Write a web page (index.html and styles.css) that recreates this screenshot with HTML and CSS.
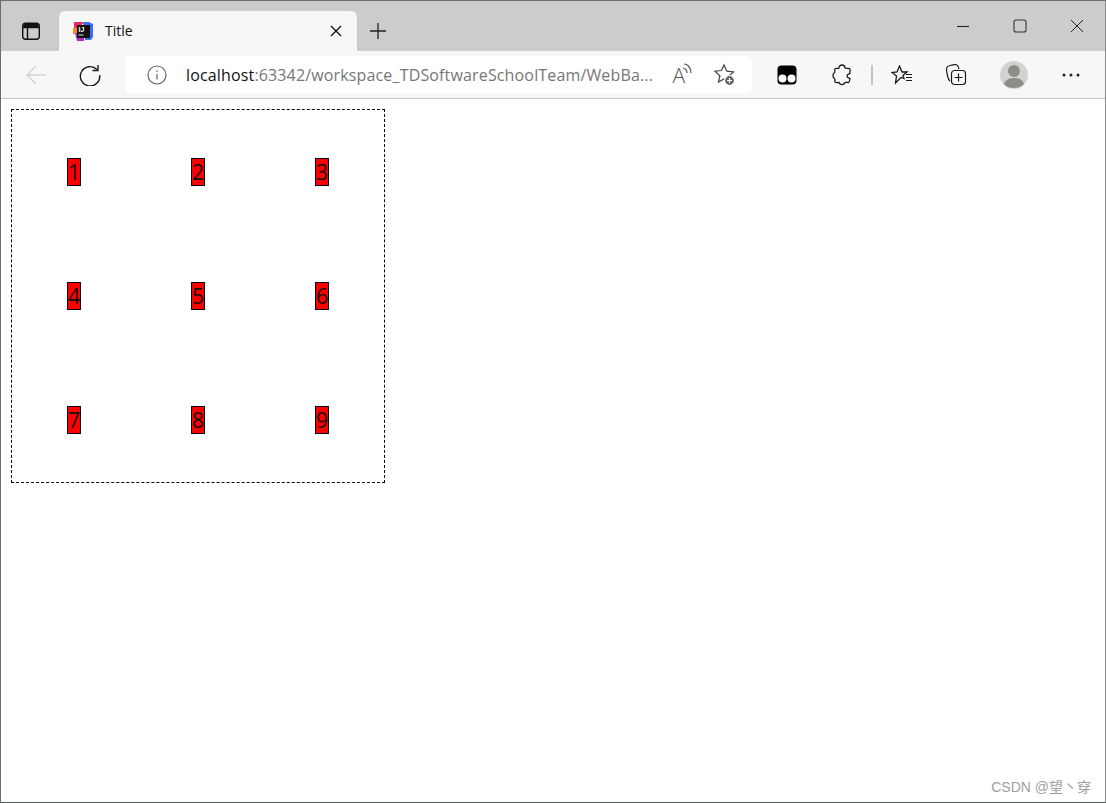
FILE: index.html
```html
<!DOCTYPE html>
<html lang="en">
<head>
    <meta charset="UTF-8">
    <title>Title</title>
    <link rel="stylesheet" href="styles.css">
</head>
<body>
    <div class="window">
        <!-- Tab strip -->
        <div class="tab-strip">
            <div class="strip-btn sidebar-btn">
                <svg width="20" height="20" viewBox="0 0 20 20" fill="none" stroke="#111" stroke-width="1.4"><rect x="1.7" y="2.2" width="16.6" height="16" rx="3"/><path d="M2 6.500h16M6.500 6.500v11.500"/><path d="M2.500 3h15v3.500h-15z" fill="#111" stroke="none"/></svg>
            </div>
            <div class="tab">
                <svg class="favicon" width="20" height="20" viewBox="0 0 20 20">
                    <path d="M2 1h7l2 2H2z" fill="#f0245e"/>
                    <path d="M10 1h6l4 2v13l-2 3h-6z" fill="#3f6cf5"/>
                    <path d="M1 1h8v8H1z" fill="#ee2a63"/>
                    <path d="M0 7h4v6H0z" fill="#f98a1e"/>
                    <path d="M2 12h9v8H4z" fill="#b32cc4"/>
                    <rect x="4" y="4" width="13" height="13" fill="#111"/>
                    <text x="5.500" y="11" class="favicon-text">IJ</text>
                    <rect x="5.500" y="13.500" width="5" height="1" fill="#eee"/>
                </svg>
                <span class="tab-title">Title</span>
                <svg class="tab-close" width="12" height="12" viewBox="0 0 12 12" stroke="#111" stroke-width="1.4"><path d="M1 1l10 10M11 1L1 11"/></svg>
            </div>
            <div class="strip-btn new-tab">
                <svg width="18" height="18" viewBox="0 0 18 18" stroke="#222" stroke-width="1.3"><path d="M9 1v16M1 9h16"/></svg>
            </div>
            <div class="caption">
                <div class="caption-btn"><svg width="14" height="14" viewBox="0 0 14 14" stroke="#222" stroke-width="1.1"><path d="M1 7.500h12"/></svg></div>
                <div class="caption-btn"><svg width="14" height="14" viewBox="0 0 14 14" fill="none" stroke="#333" stroke-width="1.1"><rect x="1" y="1" width="12" height="12" rx="2"/></svg></div>
                <div class="caption-btn"><svg width="14" height="14" viewBox="0 0 14 14" stroke="#222" stroke-width="1"><path d="M1 1l12 12M13 1L1 13"/></svg></div>
            </div>
        </div>

        <!-- Toolbar -->
        <div class="toolbar">
            <div class="tool-btn">
                <svg width="22" height="20" viewBox="0 0 22 20" fill="none" stroke="#d2d2d2" stroke-width="1.3"><path d="M21 10H2M10.500 1.500L2 10l8.500 8.500"/></svg>
            </div>
            <div class="tool-btn refresh-btn">
                <svg width="22" height="22" viewBox="0 0 22 22" fill="none" stroke="#1a1a1a" stroke-width="1.4"><path d="M18 5.500A9.700 9.700 0 1 0 20.700 11"/><path d="M19 1v5.500h-5.500"/></svg>
            </div>
            <div class="address">
                <svg class="info-icon" width="20" height="20" viewBox="0 0 20 20" fill="none" stroke="#666" stroke-width="1.2"><circle cx="10" cy="10" r="9"/><path d="M10 9v5.500M10 5.500v1.500"/></svg>
                <span class="url"><span class="host">localhost</span>:63342/workspace_TDSoftwareSchoolTeam/WebBa...</span>
                <div class="address-icons">
                    <span class="read-aloud">A<svg class="sound-waves" width="10" height="11" viewBox="0 0 10 11" fill="none" stroke="#555" stroke-width="1.2"><path d="M2 1c3 0 7 3 7 9M1 5c2 0 4 2 4 5"/></svg></span>
                    <svg width="24" height="24" viewBox="0 0 24 24" fill="none" stroke="#444" stroke-width="1.2"><path d="M12 2l2.800 6.200 6.700.7-5 4.500 1 4-5.500-1.400-5.500 3 1.400-6.300-5-4.500 6.500-.7z"/><circle cx="17.500" cy="17.500" r="5" fill="#666" stroke="#fff"/><path d="M15 17.500h5M17.500 15v5" stroke="#fff"/></svg>
                </div>
            </div>
            <div class="tool-btn first-ext">
                <svg width="20" height="20" viewBox="0 0 20 20"><rect x="0.500" y="0.500" width="19" height="19" rx="4" fill="#000"/><circle cx="5.500" cy="13.500" r="4" fill="#fff"/><circle cx="14.500" cy="13.500" r="4" fill="#fff"/></svg>
            </div>
            <div class="tool-btn">
                <svg width="20" height="22" viewBox="0 0 20 22" fill="none" stroke="#1a1a1a" stroke-width="1.3"><path d="M7 4c0-4 6-4 6 0 2 1 4-.5 5 1 .5 2-.5 3.500 0 4.500-1 .5-3 .5-3 2.500s2 2 3 2.500c-.5 1.500 0 3-1.500 4-1.500 0-3-.5-3.500 0-.5 2.500-5 3-6 0-1.500 0-3 .5-4-.5-.5-1.500.5-3-.5-3.500-2-1-2-5 0-6 1-.5-.5-2.500.5-3.500C4 3.500 6 5 7 4z"/></svg>
            </div>
            <div class="tool-sep"></div>
            <div class="tool-btn">
                <svg width="22" height="20" viewBox="0 0 22 20" fill="none" stroke="#1a1a1a" stroke-width="1.3"><path d="M8.500 1l2.500 6h5l-4 3.500 1 3-3-1-5.500 5.500 1-7L1 7.500 6 7z"/><path d="M15 9.500h6M15 12.500h6M15 15.500h6" stroke-width="1.100"/></svg>
            </div>
            <div class="tool-btn collections-btn">
                <svg width="22" height="22" viewBox="0 0 22 22" fill="none" stroke="#1a1a1a" stroke-width="1.2"><path d="M5 17C3 16 1.500 8 1.500 5 1.500 3 3 2 5 1.500c2-.5 6-1 7-.5 1 .5 1.500 2 2 4"/><rect x="6.500" y="6.500" width="14" height="14" rx="3"/><path d="M13.500 9.500v8M9.500 13.500h8"/></svg>
            </div>
            <div class="tool-btn avatar-slot">
                <svg width="28" height="28" viewBox="0 0 28 28"><circle cx="14" cy="14" r="14" fill="#d3d2cf"/><circle cx="14" cy="10" r="6" fill="#8e8c88"/><path d="M4 23c2-5 6-6 10-6s8 1 10 6c-2.500 3-6 4-10 4s-7.500-1-10-4z" fill="#8e8c88"/></svg>
            </div>
            <div class="tool-btn">
                <svg width="18" height="4" viewBox="0 0 18 4" fill="#222"><circle cx="2" cy="2" r="1.500"/><circle cx="9" cy="2" r="1.500"/><circle cx="16" cy="2" r="1.500"/></svg>
            </div>
        </div>

        <!-- Page content -->
        <div class="page">
            <div class="box">
                <div class="cell"><span class="num">1</span></div>
                <div class="cell"><span class="num">2</span></div>
                <div class="cell"><span class="num">3</span></div>
                <div class="cell"><span class="num">4</span></div>
                <div class="cell"><span class="num">5</span></div>
                <div class="cell"><span class="num">6</span></div>
                <div class="cell"><span class="num">7</span></div>
                <div class="cell"><span class="num">8</span></div>
                <div class="cell"><span class="num">9</span></div>
            </div>
            <div class="watermark">CSDN @望丶穿</div>
        </div>
    </div>
</body>
</html>
```

FILE: styles.css
```css
html, body {
    margin: 0;
    height: 100%;
}
body {
    font-family: "Open Sans", "Noto Sans CJK SC", sans-serif;
    background-color: #fff;
}
.window {
    box-sizing: border-box;
    height: 803px;
    display: flex;
    flex-direction: column;
    border: 1px solid #6e6e6e;
    border-right-color: #8a8a8a;
    border-bottom-color: #4c5a5a;
}
.tab-strip {
    height: 50px;
    background-color: #cccccc;
    display: flex;
    align-items: flex-end;
}
.strip-btn {
    display: flex;
    align-items: center;
    justify-content: center;
    height: 40px;
}
.sidebar-btn {
    width: 58px;
    padding-left: 2px;
    box-sizing: border-box;
}
.tab {
    width: 298px;
    height: 40px;
    background-color: #f7f7f7;
    border-radius: 6px 6px 0 0;
    display: flex;
    align-items: center;
    padding: 0 15px 0 14px;
    box-sizing: border-box;
}
.favicon-text {
    font-family: "Liberation Sans", sans-serif;
    font-size: 7px;
    font-weight: bold;
    fill: #fff;
}
.tab-title {
    margin-left: 12px;
    margin-bottom: 2px;
    font-size: 14px;
    color: #111;
    flex: 1;
}
.new-tab {
    width: 42px;
}
.caption {
    margin-left: auto;
    align-self: flex-start;
    display: flex;
}
.caption-btn {
    width: 57px;
    height: 50px;
    display: flex;
    align-items: center;
    justify-content: center;
}
.toolbar {
    height: 48px;
    box-sizing: border-box;
    background-color: #f7f7f7;
    border-bottom: 1px solid #c2c2c2;
    display: flex;
    align-items: center;
    padding-left: 7px;
}
.tool-btn {
    width: 55px;
    height: 40px;
    display: flex;
    align-items: center;
    justify-content: center;
}
.refresh-btn {
    padding-right: 2px;
    box-sizing: border-box;
}
.first-ext {
    margin-left: 7px;
}
.tool-sep {
    width: 2px;
    height: 20px;
    background-color: #c4c4c4;
    margin: 0 1px 0 2px;
}
.collections-btn {
    padding-right: 2px;
    box-sizing: border-box;
}
.avatar-slot {
    width: 58px;
    margin-left: 1px;
}
.address {
    width: 627px;
    height: 37px;
    margin-left: 7px;
    background-color: #fff;
    border-radius: 5px;
    display: flex;
    align-items: center;
    padding-left: 22px;
    box-sizing: border-box;
}
.url {
    margin-left: 19px;
    font-size: 16px;
    color: #767676;
    white-space: nowrap;
    letter-spacing: 0.15px;
}
.host {
    color: #111;
}
.address-icons {
    margin-left: auto;
    display: flex;
    align-items: center;
    gap: 20px;
    padding-right: 16px;
}
.read-aloud {
    display: flex;
    align-items: flex-start;
    font-size: 21px;
    font-weight: 300;
    line-height: 24px;
    color: #555;
}
.sound-waves {
    margin-left: -3px;
}
.page {
    flex: 1;
    position: relative;
    padding: 10px;
}
.box {
    width: 372px;
    height: 372px;
    border: 1px dashed #000;
    display: grid;
    grid-template-columns: repeat(3, 1fr);
    grid-template-rows: repeat(3, 1fr);
}
.cell {
    display: flex;
    align-items: center;
    justify-content: center;
}
.num {
    width: 12px;
    height: 26px;
    background-color: #ff0000;
    border: 1px solid #000;
    font-size: 21px;
    line-height: 26px;
    color: #111;
    display: flex;
    justify-content: center;
}
.watermark {
    position: absolute;
    right: 14px;
    bottom: 6px;
    font-family: "Liberation Sans", "Noto Sans CJK SC", sans-serif;
    font-size: 14px;
    color: #a0a0a0;
}
```
